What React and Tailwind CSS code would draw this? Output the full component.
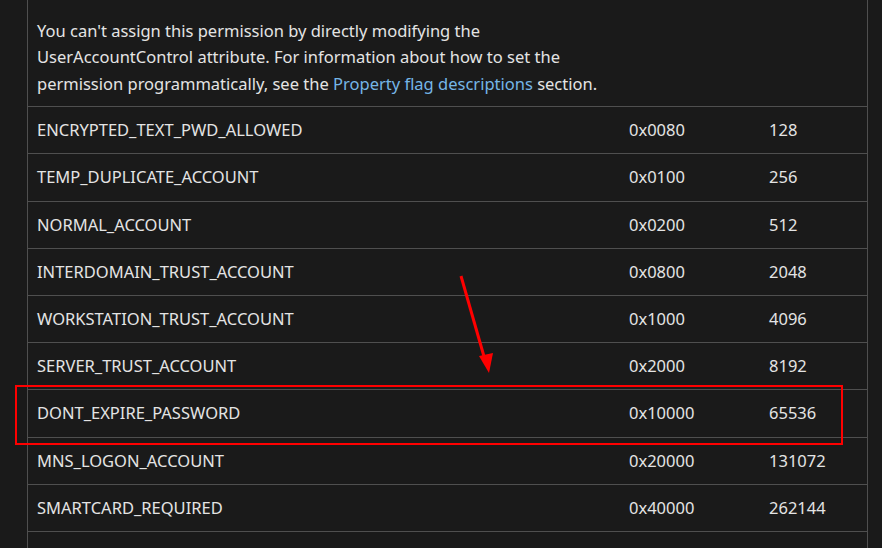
import React from "react";

const rows = [
  ["ENCRYPTED_TEXT_PWD_ALLOWED", "0x0080", "128"],
  ["TEMP_DUPLICATE_ACCOUNT", "0x0100", "256"],
  ["NORMAL_ACCOUNT", "0x0200", "512"],
  ["INTERDOMAIN_TRUST_ACCOUNT", "0x0800", "2048"],
  ["WORKSTATION_TRUST_ACCOUNT", "0x1000", "4096"],
  ["SERVER_TRUST_ACCOUNT", "0x2000", "8192"],
  ["DONT_EXPIRE_PASSWORD", "0x10000", "65536"],
  ["MNS_LOGON_ACCOUNT", "0x20000", "131072"],
  ["SMARTCARD_REQUIRED", "0x40000", "262144"],
  ["", "", ""],
];

export default function App() {
  return (
    <div
      className="relative w-[882px] h-[548px] overflow-hidden bg-[#1a1a1a] text-[#e4e4e4] text-[16.5px]"
      style={{ fontFamily: '"Noto Sans", "Open Sans", sans-serif' }}
    >
      <div className="ml-[27px] w-[841px] border-x border-[#4f4f4f]">
        {/* description cell */}
        <div className="grid grid-cols-[592px_140px_1fr] border-b border-[#4f4f4f]">
          <p className="px-[9px] pt-[18px] pb-[9px] leading-[26.4px]">
            You can't assign this permission by directly modifying the
            <br />
            UserAccountControl attribute. For information about how to set the
            <br />
            permission programmatically, see the{" "}
            <span className="text-[#75b6e7]">Property flag descriptions</span>{" "}
            section.
          </p>
          <div />
          <div />
        </div>

        {rows.map((r, i) => (
          <div
            key={i}
            className="grid grid-cols-[592px_140px_1fr] border-b border-[#4f4f4f] leading-[26.2px]"
          >
            <div className="px-[9px] py-[10px] h-[46.2px] whitespace-nowrap">{r[0]}</div>
            <div className="px-[9px] py-[10px] whitespace-nowrap">{r[1]}</div>
            <div className="px-[9px] py-[10px] whitespace-nowrap">{r[2]}</div>
          </div>
        ))}
      </div>

      {/* highlight box */}
      <div className="absolute left-[15px] top-[385px] w-[828px] h-[60px] border-2 border-[#ff0000] pointer-events-none" />

      {/* arrow */}
      <svg
        className="absolute left-0 top-0 pointer-events-none"
        width="882"
        height="548"
        viewBox="0 0 882 548"
      >
        <line x1="461" y1="276" x2="485" y2="360" stroke="#ff0000" strokeWidth="3" />
        <polygon points="489,373 479,356 493,353" fill="#ff0000" />
      </svg>
    </div>
  );
}
